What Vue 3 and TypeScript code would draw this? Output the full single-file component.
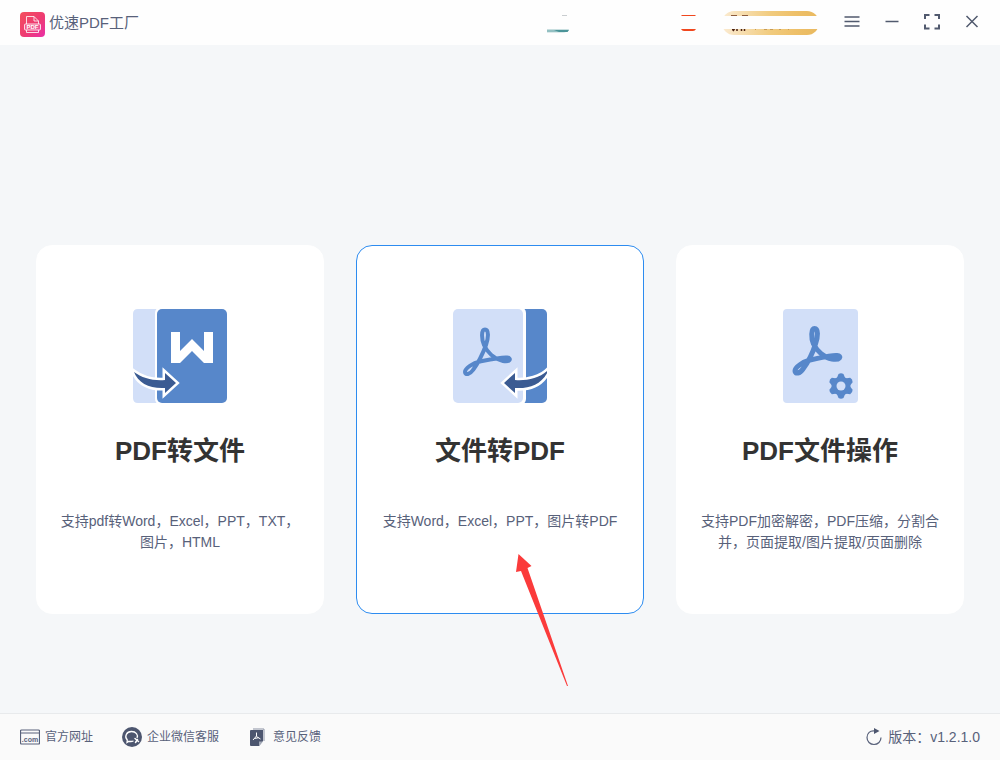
<script setup lang="ts">
import { ref } from 'vue'

type IconName = 'toFile' | 'toPdf' | 'operate'

interface Feature {
  id: IconName
  title: string
  desc: string
}

const features: Feature[] = [
  { id: 'toFile', title: 'PDF转文件', desc: '支持pdf转Word，Excel，PPT，TXT，图片，HTML' },
  { id: 'toPdf', title: '文件转PDF', desc: '支持Word，Excel，PPT，图片转PDF' },
  { id: 'operate', title: 'PDF文件操作', desc: '支持PDF加密解密，PDF压缩，分割合并，页面提取/图片提取/页面删除' },
]

const active = ref<IconName>('toPdf')
const version = 'v1.2.1.0'
</script>

<template>
  <div class="app">
    <header class="topbar">
      <div class="brand">
        <svg class="logo" viewBox="0 0 25 25" aria-hidden="true">
          <defs>
            <linearGradient id="logoFill" x1="0" y1="0" x2="1" y2="1">
              <stop offset="0" stop-color="#f4505c" />
              <stop offset="0.55" stop-color="#ee3b72" />
              <stop offset="1" stop-color="#e930a8" />
            </linearGradient>
          </defs>
          <rect width="25" height="25" rx="4" fill="url(#logoFill)" />
          <g fill="none" stroke="#fff" stroke-opacity="0.8" stroke-width="1">
            <path d="M6.500 12V4.500H14L18.500 9V12" />
            <path d="M14 4.500V9H18.500" />
            <rect x="4.500" y="12" width="16" height="6" rx="1" fill="#fff" fill-opacity="0.15" />
            <path d="M6.500 18V20.500H18.500V18" />
          </g>
          <text x="12.500" y="17" text-anchor="middle" class="logo-text">PDF</text>
        </svg>
        <span class="brand-name">优速PDF工厂</span>
      </div>

      <svg class="promo" viewBox="0 0 272 24" aria-hidden="true">
        <defs>
          <linearGradient id="gold" x1="0" x2="1">
            <stop offset="0" stop-color="#fbebd2" />
            <stop offset="0.5" stop-color="#f1cb7e" />
            <stop offset="0.75" stop-color="#eec069" />
            <stop offset="1" stop-color="#e9b95f" />
          </linearGradient>
        </defs>
        <path d="M0 18.500H22L20 21H0Z" fill="#93c0c2" />
        <path d="M7 19H22L20.500 21H12Z" fill="#4b9499" />
        <path d="M0 21.500H19L17 22H0Z" fill="#b9d5d8" />
        <path d="M15 4.500H20M4 6V9" stroke="#c9cdd0" fill="none" />
        <path d="M135 4H148L149 5H134ZM134 18H149Q148 20 146 20H137Q135 20 134 18Z" fill="#f0471e" />
        <rect x="175" y="0" width="97" height="24" rx="12" fill="url(#gold)" />
        <path d="M184 4.500H190M195 4.500H201" stroke="#8d5b3c" />
        <path d="M185 18.500H187L186 20M190 18V20M194.500 18V20M197.500 18V20" stroke="#4b2010" stroke-width="1.500" fill="none" />
        <path d="M208 18.500H209M217 18.500H220M223 18.500H226M232 18.500H234M241 18.500H242" stroke="#c99c55" />
        <rect x="0" y="5" width="272" height="13" fill="#fefefe" />
      </svg>

      <nav class="window-controls" aria-label="窗口">
        <button type="button" aria-label="菜单">
          <svg viewBox="0 0 16 16"><path d="M.5 3H15.500M.5 7.500H15.500M.5 12H15.500" /></svg>
        </button>
        <button type="button" aria-label="最小化">
          <svg viewBox="0 0 16 16"><path d="M1.500 7.500H14.500" /></svg>
        </button>
        <button type="button" aria-label="最大化">
          <svg viewBox="0 0 16 16"><path class="thick" d="M1 5V1H5.500M10.500 1H15V5M15 10.500V14.500H10.500M5.500 14.500H1V10.500" /></svg>
        </button>
        <button type="button" aria-label="关闭">
          <svg viewBox="0 0 16 16"><path d="M2.500 2L13.500 13M13.500 2L2.500 13" /></svg>
        </button>
      </nav>
    </header>

    <main class="features">
      <button
        v-for="item in features"
        :key="item.id"
        type="button"
        class="card"
        :class="{ active: item.id === active }"
        @click="active = item.id"
      >
        <svg v-if="item.id === 'toFile'" class="icon" viewBox="0 0 94 94" aria-hidden="true">
          <path d="M5 0H26V94H5Q0 94 0 89V5Q0 0 5 0Z" fill="#d2dff8" />
          <rect x="22" y="-2" width="74" height="98" rx="6" fill="#fff" />
          <rect x="24" width="70" height="94" rx="5" fill="#5787ca" />
          <path d="M38 23H47V42L59 30L71 42V23H80V54H71L59 42L47 54H38Z" fill="#fff" />
          <path class="swoosh" d="M1 63C9 69 20 72 32 71V64L43 74L32 84V79C17 80 5 74 1 63Z" />
        </svg>
        <svg v-else-if="item.id === 'toPdf'" class="icon" viewBox="0 0 94 94" aria-hidden="true">
          <rect x="64" width="30" height="94" rx="5" fill="#5787ca" />
          <rect x="-2" y="-2" width="75" height="98" rx="6" fill="#fff" />
          <rect width="70" height="94" rx="5" fill="#d2dff8" />
          <path class="acrobat" d="M32 20.500C28 20.500 28.500 30 31 36C34 43 41 50 50 52C57 53.500 59 49 54 48.500C48 48 39 50 27 52.500C20 54 12 59 12 63C12 66.500 17 65.500 20 61C26 53 30 44 33 36C35.500 29 36 20.500 32 20.500Z" />
          <path class="swoosh" transform="translate(94 0) scale(-1 1)" d="M-2 60C6 69 20 72 32 71V64L43 74L32 84V79C17 80 4 75 -2 60Z" />
        </svg>
        <svg v-else class="icon narrow" viewBox="0 0 75 94" aria-hidden="true">
          <rect width="75" height="94" rx="4" fill="#d2dff8" />
          <path class="acrobat bold" transform="translate(0 -1)" d="M31.500 20.500C28 20.500 28 30 30.500 36C34 43 41 49.500 49 51C57 52.500 59 48 54 47.500C48 47 39 49.500 27 52C20 54 12 59 12 63C12 66.500 17 65.500 20 61C26 53 30 44 32.500 36C35 29 35.500 20.500 31.500 20.500Z" />
          <g transform="translate(58 77)" fill="#5787ca">
            <g v-for="n in 6" :key="n" :transform="`rotate(${n * 60})`">
              <path d="M-4.500 -7L-2.500 -12Q0 -13.500 2.500 -12L4.500 -7Z" />
            </g>
            <circle r="9.500" />
            <circle r="4.500" fill="#d2dff8" />
          </g>
        </svg>
        <span class="card-title">{{ item.title }}</span>
        <span class="card-desc">{{ item.desc }}</span>
        <svg v-if="item.id === 'toPdf'" class="pointer" viewBox="0 0 53 133" aria-hidden="true">
          <path d="M2.500 0L15.500 12L11.500 14L52 132L51 132L5 17L0 18Z" fill="#fb3b3b" />
        </svg>
      </button>
    </main>

    <footer class="bottombar">
      <a href="#site">
        <svg viewBox="0 0 20 20" aria-hidden="true">
          <rect x=".5" y="3" width="19" height="14" rx="1" fill="none" stroke="#58617a" stroke-width="1.200" />
          <path d="M1 6H19" stroke="#58617a" />
          <text x="10" y="15" text-anchor="middle" class="dotcom">.com</text>
        </svg>
        <span>官方网址</span>
      </a>
      <a href="#wechat">
        <svg viewBox="0 0 20 20" aria-hidden="true">
          <circle cx="10" cy="10" r="10" fill="#4d566f" />
          <path d="M11.500 14C9.500 14.700 8 14.500 7 14.300L5 15.500L5.300 13C2 9.500 4.500 4.500 9.500 4.500C14 4.500 16.500 8 15 11" fill="none" stroke="#fff" stroke-width="1.300" />
          <path d="M13 11.500L16.500 14.500M15.500 12.500L13.500 15.500" stroke="#fff" stroke-width="1.500" stroke-linecap="round" />
        </svg>
        <span>企业微信客服</span>
      </a>
      <a href="#feedback">
        <svg viewBox="0 0 20 20" aria-hidden="true">
          <path d="M5 2H16V14" fill="none" stroke="#8c93a5" />
          <path d="M3 3H15V14L11 19H3Q2 19 2 18V4Q2 3 3 3Z" fill="#4d566f" />
          <path d="M11 19V14.500H15Z" fill="#a5abb9" />
          <path d="M8.500 5.500V9L5 13M8.500 9.500L12.500 12M6.500 11.500L10.500 10.700" fill="none" stroke="#fff" />
        </svg>
        <span>意见反馈</span>
      </a>
      <button type="button" class="version">
        <svg viewBox="0 0 16 18" aria-hidden="true">
          <path d="M9 3C4 2 1 5.500 1 9.500C1 13.500 4 16.500 8 16.500C12 16.500 15 13.500 15 9.500" fill="none" stroke="#58617a" stroke-width="1.200" />
          <path d="M8 0L13.500 3L8 6Z" fill="#4d566f" />
        </svg>
        <span>版本：{{ version }}</span>
      </button>
    </footer>
  </div>
</template>

<style>
body {
  margin: 0;
}
</style>

<style scoped>
.app {
  display: flex;
  flex-direction: column;
  min-height: 100vh;
  background: #f5f7f9;
  color: #58617a;
  font-family: "Liberation Sans", "Noto Sans CJK SC", sans-serif;
}

button {
  margin: 0;
  padding: 0;
  border: 0;
  background: none;
  color: inherit;
  font: inherit;
  cursor: pointer;
}

.topbar {
  display: flex;
  align-items: center;
  box-sizing: border-box;
  height: 45px;
  padding: 0 8px 0 20px;
  background: #fefefe;
}

.brand {
  display: flex;
  align-items: flex-start;
  gap: 4px;
  padding-top: 4px;
  margin-right: auto;
}

.logo {
  width: 25px;
  height: 25px;
}

.logo-text {
  fill: #fff;
  font-size: 6px;
  font-weight: 700;
}

.brand-name {
  font-size: 15px;
  line-height: 22px;
}

.promo {
  width: 272px;
  height: 24px;
  margin-right: 13px;
}

.window-controls {
  display: flex;
  padding-bottom: 2px;
}

.window-controls button {
  display: flex;
  align-items: center;
  justify-content: center;
  width: 40px;
  height: 40px;
}

.window-controls svg {
  width: 16px;
  height: 16px;
  fill: none;
  stroke: #515a6e;
  stroke-width: 1.5;
}

.window-controls .thick {
  stroke-width: 2;
}

.features {
  flex: 1;
  display: grid;
  grid-template-columns: repeat(3, 1fr);
  align-items: start;
  gap: 32px;
  padding: 200px 36px 48px;
}

.card {
  position: relative;
  display: flex;
  flex-direction: column;
  align-items: center;
  padding: 63px 23px 60px;
  border: 1px solid #fff;
  border-radius: 16px;
  background: #fff;
}

.card.active {
  border-color: #2d8cf0;
}

.icon {
  width: 94px;
  height: 94px;
}

.icon.narrow {
  width: 75px;
}

.swoosh {
  fill: #3b5b92;
  stroke: #fff;
  stroke-width: 5;
  paint-order: stroke;
}

.acrobat {
  fill: none;
  stroke: #5787ca;
  stroke-width: 4;
  stroke-linejoin: round;
}

.acrobat.bold {
  stroke-width: 5;
}

.card-title {
  margin-top: 30px;
  color: #333;
  font-size: 26px;
  font-weight: 700;
  line-height: 36px;
}

.card-desc {
  min-height: 42px;
  margin-top: 42px;
  font-size: 14px;
  line-height: 21px;
  text-align: center;
}

.pointer {
  position: absolute;
  left: 159px;
  top: 308px;
  width: 53px;
  height: 133px;
  pointer-events: none;
}

.bottombar {
  display: flex;
  align-items: center;
  gap: 29px;
  box-sizing: border-box;
  height: 47px;
  padding: 0 20px;
  border-top: 1px solid #e8eaec;
  background: #fafafa;
}

.bottombar a {
  display: flex;
  align-items: center;
  gap: 5px;
  color: inherit;
  font-size: 12px;
  line-height: 20px;
  text-decoration: none;
}

.bottombar a svg {
  width: 20px;
  height: 20px;
}

.dotcom {
  fill: #58617a;
  font-size: 7px;
  font-weight: 700;
}

.version {
  display: flex;
  align-items: center;
  gap: 6px;
  margin-left: auto;
  font-size: 14px;
  line-height: 20px;
}

.version svg {
  width: 16px;
  height: 18px;
}
</style>
